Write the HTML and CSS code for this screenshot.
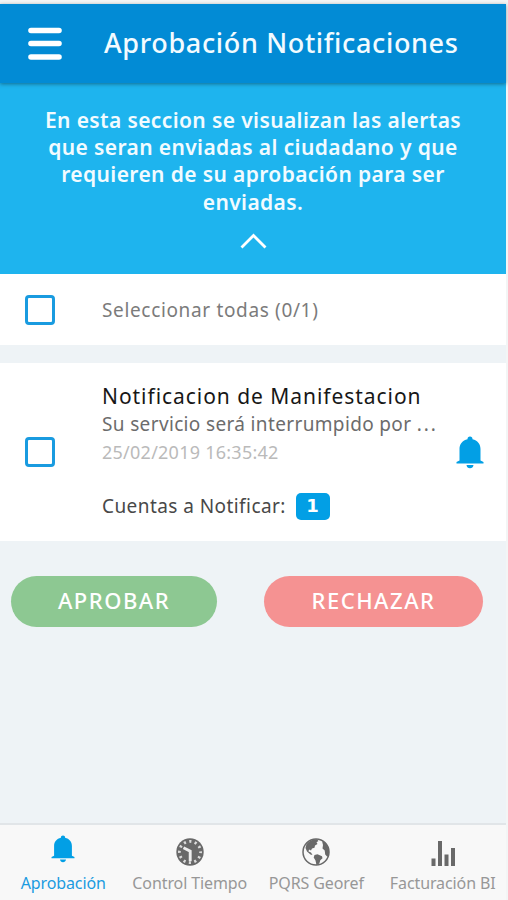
FILE: index.html
```html
<!DOCTYPE html>
<html lang="es">
<head>
    <meta charset="UTF-8">
    <title>Aprobación Notificaciones</title>
    <link rel="stylesheet" href="styles.css">
</head>
<body>
    <div class="app">
        <header class="header">
            <button class="menu" aria-label="Menú">
                <svg width="34" height="34" viewBox="0 0 34 34" stroke="#fff" stroke-width="5.6" stroke-linecap="round">
                    <path d="M3 3.500h28M3 16.500h28M3 30h28"/>
                </svg>
            </button>
            <h1 class="title">Aprobación Notificaciones</h1>
        </header>

        <section class="info">
            <p class="info-text">
                En esta seccion se visualizan las alertas<br>
                que seran enviadas al ciudadano y que<br>
                requieren de su aprobación para ser<br>
                enviadas.
            </p>
            <svg class="arrow" width="28" height="18" viewBox="0 0 28 18" fill="none" stroke="#fff" stroke-width="2.8">
                <path d="M2.500 15.500L14.500 3.500l12 12"/>
            </svg>
        </section>

        <div class="select-all">
            <span class="checkbox"></span>
            <span class="select-label">Seleccionar todas (0/1)</span>
        </div>

        <article class="card">
            <span class="checkbox"></span>
            <div class="card-body">
                <h2 class="card-title">Notificacion de Manifestacion</h2>
                <p class="card-text">Su servicio será interrumpido por <span class="dots">...</span></p>
                <p class="card-date">25/02/2019 16:35:42</p>
                <p class="card-accounts"><span class="accounts-label">Cuentas a Notificar:</span> <span class="badge">1</span></p>
            </div>
            <svg class="card-bell" width="28" height="33" viewBox="0 0 28 33" fill="#029fe5">
                <path d="M14 0.500c-1.600 0-2.500 1-2.500 2.700C6.500 4.300 3.500 8 3.500 13v11.500L0.500 26v1.500h27V26l-3-1.500V13c0-5-3-8.700-8-9.800C16.500 1.500 15.600.5 14 .5zM10.500 29h7c-.3 2.200-1.600 3.200-3.500 3.200s-3.200-1-3.500-3.200z"/>
            </svg>
        </article>

        <div class="actions">
            <button class="btn approve">APROBAR</button>
            <button class="btn reject">RECHAZAR</button>
        </div>

        <nav class="tabs">
            <a class="tab active">
                <svg width="24" height="28" viewBox="0 0 28 33" fill="#029fe5">
                    <path d="M14 0.500c-1.600 0-2.500 1-2.500 2.700C6.500 4.300 3.500 8 3.500 13v11.500L0.500 26v1.500h27V26l-3-1.500V13c0-5-3-8.700-8-9.800C16.500 1.500 15.600.5 14 .5zM10.500 29h7c-.3 2.200-1.600 3.200-3.500 3.200s-3.200-1-3.500-3.200z"/>
                </svg>
                <span>Aprobación</span>
            </a>
            <a class="tab">
                <svg width="28" height="28" viewBox="0 0 28 28" fill="none">
                    <circle cx="14" cy="14" r="13.700" fill="#696969"/>
                    <circle cx="14" cy="14" r="10.600" stroke="#dcdcdc" stroke-width="2.800" stroke-dasharray="2.200 3.350" stroke-dashoffset="1.100"/>
                    <path d="M7.500 9.800l6.700 3.400v10" stroke="#eee" stroke-width="2.900"/>
                </svg>
                <span>Control Tiempo</span>
            </a>
            <a class="tab">
                <svg width="28" height="28" viewBox="0 0 28 28" fill="#696969">
                    <circle cx="14" cy="14" r="13" fill="none" stroke="#696969" stroke-width="1.500"/>
                    <path d="M6 4.500C9 2 12 1 15 1.200L16.500 3l-2 1.300 1 1.700-2.500 1.500-.5 2.300-2.500.7-1 2-2-1-.5 2 2.500 1 1.500 2.500-2-.5-3.500-3L3.500 10 4.500 6z"/>
                    <path d="M12.500 17l3-.8 4.500 2 .5 2-2.200 2-1 3.300-2.800 1.800-1-4.800-1.800-3z"/>
                    <path d="M20 3l2.500 1.300C26 7 27.500 11 27 15l-1.500 4-2.300-2.500-.5-4-2.200-2 .5-3.500z"/>
                </svg>
                <span>PQRS Georef</span>
            </a>
            <a class="tab">
                <svg width="24" height="26" viewBox="0 0 24 26" fill="#696969">
                    <path d="M.5 18.500h4V26h-4zM7 1h4v25H7zM13.500 14.500h4V26h-4zM20 8h4v18h-4z"/>
                </svg>
                <span>Facturación BI</span>
            </a>
        </nav>
    </div>
</body>
</html>
```

FILE: styles.css
```css
* {
    box-sizing: border-box;
}
body {
    margin: 0;
    padding: 4px 2px 0 0;
    height: 900px;
    background-color: #f3f5f5;
    font-family: "Noto Sans", sans-serif;
    overflow: hidden;
}
h1, h2, p {
    margin: 0;
    font-weight: normal;
    white-space: nowrap;
}
svg {
    display: block;
}
button {
    border: none;
    padding: 0;
    background: none;
    font-family: inherit;
}
.app {
    height: 896px;
    display: flex;
    flex-direction: column;
    background-color: #eef3f6;
}

/* header */
.header {
    height: 79px;
    flex: none;
    display: flex;
    align-items: center;
    padding-left: 28px;
    background-color: #028bd5;
    box-shadow: 0 1px 4px rgba(0,0,0,0.4);
    z-index: 1;
}
.menu {
    width: 34px;
    margin-right: 42px;
}
.title {
    padding-bottom: 2px;
    color: #f2fbff;
    font-size: 27px;
    font-weight: 500;
    letter-spacing: 0.65px;
}
.info {
    height: 191px;
    flex: none;
    padding-top: 24px;
    background-color: #1eb4ee;
    text-align: center;
}
.info-text {
    color: #f2fbff;
    font-size: 21px;
    font-weight: 600;
    line-height: 27.2px;
    letter-spacing: 0.38px;
}
.arrow {
    margin: 16px auto 0;
}

/* list */
.select-all {
    height: 71px;
    flex: none;
    display: flex;
    align-items: center;
    padding: 1px 0 0 25px;
    background-color: #fff;
}
.checkbox {
    width: 30px;
    height: 30px;
    flex: none;
    margin-right: 47px;
    border: 3px solid #199be0;
    border-radius: 4px;
}
.select-label {
    color: #7b7b7b;
    font-size: 19px;
    letter-spacing: 0.65px;
}
.card {
    height: 178px;
    flex: none;
    display: flex;
    align-items: center;
    margin-top: 18px;
    padding: 0 22px 0 25px;
    background-color: #fff;
}
.card-body {
    flex: 1;
}
.card-title {
    color: #171717;
    font-size: 21px;
    line-height: 30px;
    letter-spacing: 0.95px;
}
.card-text {
    color: #6c6c6c;
    font-size: 19px;
    line-height: 27px;
    letter-spacing: 0.35px;
}
.dots {
    letter-spacing: 2px;
}
.card-date {
    color: #bababa;
    font-size: 18px;
    line-height: 29px;
    letter-spacing: 0.25px;
}
.card-accounts {
    display: flex;
    align-items: center;
    margin-top: 22px;
    height: 34px;
    color: #484848;
    font-size: 19px;
    letter-spacing: 0.43px;
}
.badge {
    width: 34px;
    height: 27px;
    margin-left: 10px;
    border-radius: 5px;
    background-color: #029fe5;
    color: #fff;
    font-family: "DejaVu Sans", sans-serif;
    font-size: 18px;
    font-weight: bold;
    line-height: 26px;
    text-align: center;
}

/* buttons */
.actions {
    display: flex;
    margin: 35px 0 0 11px;
}
.btn {
    height: 51px;
    padding-bottom: 3px;
    border-radius: 26px;
    color: #fff;
    font-size: 22px;
    font-weight: 500;
    letter-spacing: 1.5px;
}
.approve {
    width: 206px;
    margin-right: 47px;
    background-color: #8dc892;
}
.reject {
    width: 219px;
    background-color: #f59292;
}

/* bottom tabs */
.tabs {
    height: 77px;
    flex: none;
    display: grid;
    grid-template-columns: repeat(4, 126.5px);
    margin-top: auto;
    border-top: 2px solid #e1e5e8;
    background-color: #f8f8f8;
}
.tab {
    display: flex;
    flex-direction: column;
    justify-content: flex-end;
    align-items: center;
    padding-bottom: 6px;
    color: #979797;
    font-size: 16px;
    line-height: 22px;
    letter-spacing: -0.1px;
    white-space: nowrap;
}
.tab svg {
    margin-bottom: 6px;
}
.tab.active {
    color: #1b9be0;
}
.tab.active svg {
    margin-bottom: 9px;
}
```
